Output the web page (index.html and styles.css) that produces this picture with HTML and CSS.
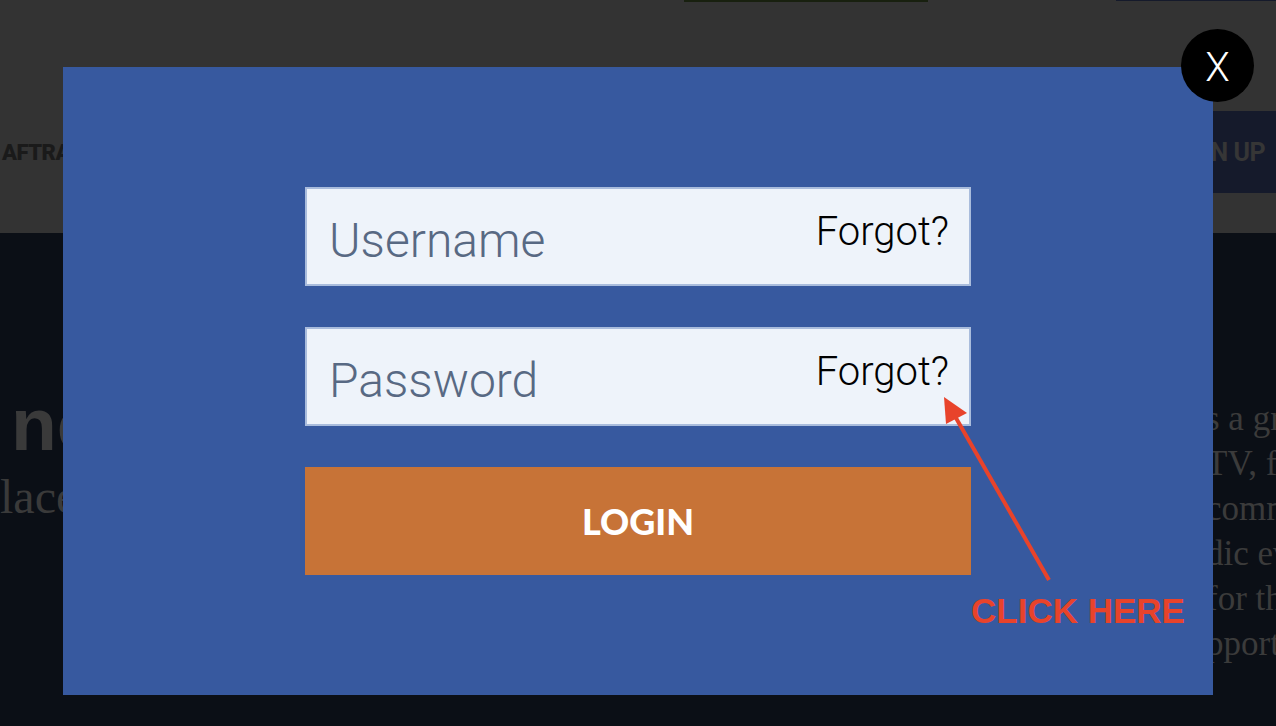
FILE: index.html
```html
<!DOCTYPE html>
<html lang="en">
<head>
  <meta charset="UTF-8" />
  <meta name="viewport" content="width=device-width, initial-scale=1" />
  <title>Member Login</title>
  <link rel="stylesheet" href="styles.css">
</head>
<body>
  <header class="site-header">
    <div class="top-strip">
      <span class="strip-green"></span>
      <span class="strip-navy"></span>
    </div>
    <nav class="main-nav">
      <a class="nav-link" href="#">AFTRA</a>
      <a class="signup" href="#">SIGN UP</a>
    </nav>
  </header>

  <main class="content">
    <section class="lead">
      <h2>news</h2>
      <p>laces</p>
    </section>
    <section class="aside">
      <p>s a great</p>
      <p>TV, film</p>
      <p>community</p>
      <p>dic events</p>
      <p>for the</p>
      <p>pport</p>
    </section>
  </main>

  <div class="modal">
    <form class="login-form">
      <label class="field">
        <input type="text" placeholder="Username" />
        <a class="forgot" href="#">Forgot?</a>
      </label>
      <label class="field">
        <input type="password" placeholder="Password" />
        <a class="forgot" href="#">Forgot?</a>
      </label>
      <button class="login-btn" type="button">LOGIN</button>
    </form>

    <!-- annotation -->
    <svg class="arrow" width="120" height="200" viewBox="0 0 120 200">
      <line x1="109" y1="190" x2="16" y2="28" stroke="#e8432b" stroke-width="4" />
      <polygon points="4,7 27,23 6,34" fill="#e8432b" />
    </svg>
    <span class="click-here">CLICK HERE</span>
  </div>

  <button class="close-btn" type="button">X</button>
</body>
</html>
```

FILE: styles.css
```css
body {
  margin: 0;
  width: 1276px;
  height: 726px;
  overflow: hidden;
  background: #0b0f16;
  font-family: 'Liberation Serif', serif;
  position: relative;
}

.site-header {
  background: #333333;
  height: 233px;
}

.top-strip {
  display: flex;
  height: 2px;
}

.strip-green {
  margin-left: 684px;
  width: 244px;
  height: 2px;
  background: #18200f;
}

.strip-navy {
  margin-left: 188px;
  flex: 1;
  height: 1px;
  background: #151a2b;
}

.main-nav {
  margin-top: 109px;
  height: 82px;
  display: flex;
  justify-content: space-between;
  align-items: center;
}

.nav-link {
  padding-left: 2px;
  font-family: 'Roboto', sans-serif;
  font-weight: 900;
  font-size: 22px;
  letter-spacing: -0.5px;
  color: #1a1a1a;
  text-decoration: none;
}

.signup {
  height: 82px;
  width: 130px;
  box-sizing: border-box;
  padding-right: 11px;
  display: flex;
  align-items: center;
  justify-content: flex-end;
  background: #151a2b;
  font-family: 'Roboto', sans-serif;
  font-weight: 700;
  font-size: 25px;
  letter-spacing: -0.5px;
  color: #363636;
  text-decoration: none;
}

.content {
  display: grid;
  grid-template-columns: 1fr 70px;
}

.lead {
  padding-top: 154px;
}

.lead h2 {
  margin: 0;
  padding-left: 11px;
  font-family: 'Liberation Sans', sans-serif;
  font-weight: 700;
  font-size: 75px;
  line-height: 75px;
  color: #3a3a3a;
}

.lead p {
  margin: 6px 0 0;
  font-size: 48px;
  line-height: 1.2;
  color: #3a3a3a;
}

.aside {
  padding-top: 163px;
}

.aside p {
  margin: 0;
  white-space: nowrap;
  font-size: 35px;
  line-height: 45px;
  color: #3b3b3b;
}

.modal {
  position: absolute;
  left: 63px;
  top: 67px;
  width: 1150px;
  height: 628px;
  box-sizing: border-box;
  padding: 120px 0 0 242px;
  background: #37599f;
}

.login-form {
  width: 666px;
  display: flex;
  flex-direction: column;
  gap: 41px;
}

.field {
  height: 99px;
  box-sizing: border-box;
  border: 2px solid #a9bcdc;
  background: #eef3fa;
  padding: 0 20px 0 22px;
  display: flex;
  align-items: flex-start;
}

.field input {
  flex: 1;
  min-width: 0;
  margin-top: 23px;
  height: 56px;
  padding: 0;
  border: none;
  background: transparent;
  outline: none;
  font-family: 'Roboto', sans-serif;
  font-weight: 300;
  font-size: 48px;
  color: #586983;
}

.field input::placeholder {
  color: #586983;
  opacity: 1;
}

.forgot {
  margin-top: 23px;
  font-family: 'Roboto', sans-serif;
  font-weight: 300;
  font-size: 40px;
  line-height: 1;
  color: #000;
  text-decoration: none;
}

.login-btn {
  height: 108px;
  border: none;
  background: #c77337;
  color: #fff;
  font-family: 'Lato', sans-serif;
  font-weight: 900;
  font-size: 36px;
  cursor: pointer;
}

.arrow {
  position: absolute;
  left: 877px;
  top: 323px;
}

.click-here {
  position: absolute;
  left: 908px;
  top: 526px;
  font-family: 'Liberation Sans', sans-serif;
  font-weight: 700;
  font-size: 35px;
  line-height: 1;
  color: #e8432b;
}

.close-btn {
  position: absolute;
  left: 1181px;
  top: 29px;
  width: 73px;
  height: 73px;
  padding: 4px 0 0;
  border: none;
  border-radius: 50%;
  background: #000;
  color: #fff;
  font-family: 'Roboto', sans-serif;
  font-weight: 300;
  font-size: 40px;
  cursor: pointer;
}
```
